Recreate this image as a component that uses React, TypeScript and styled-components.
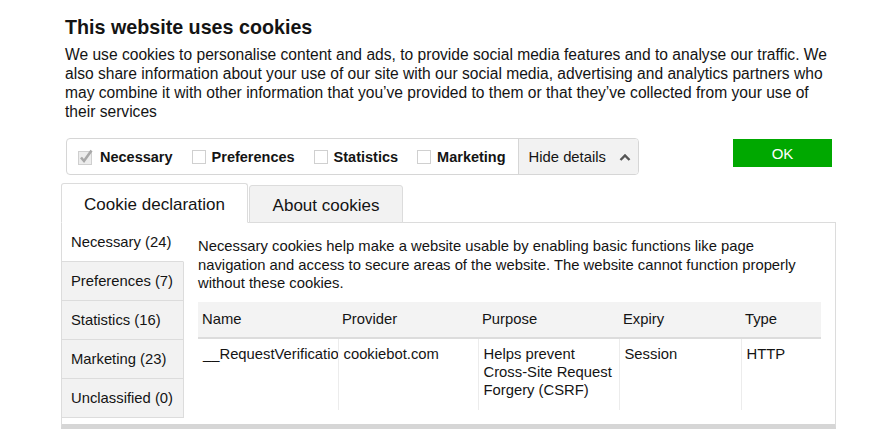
import styled, { createGlobalStyle } from "styled-components";

const GlobalStyle = createGlobalStyle`
  body {
    margin: 0;
    background: #ffffff;
    font-family: "Liberation Sans", Arial, sans-serif;
    color: #141414;
  }
`;

const Root = styled.div`
  width: 775px;
  margin-left: 61px;
  padding-top: 15px;
`;

const Title = styled.h2`
  margin: 0 0 0 4px;
  font-size: 19.7px;
  line-height: 24px;
  font-weight: 700;
  color: #141414;
`;

const Intro = styled.p`
  margin: 6px 0 0 4px;
  width: 770px;
  font-size: 15.6px;
  line-height: 19px;
  color: #141414;
`;

const ControlsRow = styled.div`
  display: flex;
  justify-content: space-between;
  align-items: flex-start;
  margin-top: 17px;
  padding-left: 5px;
`;

const Bar = styled.div`
  display: flex;
  align-items: stretch;
  height: 35px;
  border: 1px solid #d6d6d6;
  border-radius: 4px;
  overflow: hidden;
  padding-left: 11px;
`;

const CheckItem = styled.label<{ $last?: boolean }>`
  display: flex;
  align-items: center;
  gap: 6px;
  margin-right: ${(p) => (p.$last ? "12px" : "19px")};
  font-size: 14.5px;
  font-weight: 700;
  color: #141414;
`;

const Box = styled.span`
  display: inline-block;
  width: 12px;
  height: 12px;
  border: 1px solid #d0d0d0;
  background: #fff;
`;

const HideDetails = styled.div`
  display: flex;
  align-items: center;
  background: #f2f2f2;
  border-left: 1px solid #d6d6d6;
  padding: 0 7px 0 10px;
  font-size: 14.8px;
  color: #141414;
  gap: 13px;
`;

const OkButton = styled.button`
  width: 99px;
  height: 28px;
  margin-top: 1px;
  margin-right: 4px;
  border: none;
  background: #00a800;
  color: #ffffff;
  font-family: "Liberation Sans", Arial, sans-serif;
  font-size: 15px;
`;

const Tabs = styled.div`
  display: flex;
  align-items: flex-end;
  gap: 1px;
  margin-top: 8px;
`;

const Tab = styled.div<{ $active?: boolean }>`
  height: ${(p) => (p.$active ? "35px" : "33px")};
  padding-top: 3px;
  display: flex;
  align-items: center;
  justify-content: center;
  width: ${(p) => (p.$active ? "185px" : "152px")};
  border: 1px solid #dcdcdc;
  border-bottom: ${(p) => (p.$active ? "1px solid #ffffff" : "1px solid #dcdcdc")};
  margin-bottom: -1px;
  background: ${(p) => (p.$active ? "#ffffff" : "#f2f2f2")};
  border-radius: 3px 3px 0 0;
  font-size: 17px;
  color: #141414;
  position: relative;
  z-index: ${(p) => (p.$active ? 1 : 0)};
`;

const Panel = styled.div`
  display: flex;
  height: 201px;
  border: 1px solid #dcdcdc;
  border-bottom: 5px solid #d6d6d6;
`;

const Nav = styled.div`
  width: 122px;
  flex-shrink: 0;
  display: flex;
  flex-direction: column;
`;

const NavItem = styled.div<{ $active?: boolean }>`
  height: 38px;
  display: flex;
  align-items: center;
  padding-left: 9px;
  font-size: 14.8px;
  color: #141414;
  background: ${(p) => (p.$active ? "#ffffff" : "#f2f2f2")};
  border-bottom: 1px solid #dcdcdc;
  border-right: ${(p) => (p.$active ? "1px solid #ffffff" : "1px solid #dcdcdc")};
`;

const Content = styled.div`
  flex: 1;
  padding: 14px 14px 0 14px;
  overflow: hidden;
`;

const Description = styled.p`
  margin: 0;
  width: 623px;
  font-size: 14.8px;
  line-height: 18.5px;
  color: #141414;
`;

const Table = styled.table`
  margin-top: 9px;
  width: 623px;
  border-collapse: collapse;
  table-layout: fixed;
  font-size: 14.8px;
  color: #141414;
`;

const Th = styled.th`
  height: 35px;
  background: #f3f3f3;
  border-bottom: 2px solid #dcdcdc;
  text-align: left;
  font-weight: 400;
  padding: 0 0 0 4px;
`;

const Td = styled.td<{ $first?: boolean }>`
  vertical-align: top;
  padding: 6px 4px 11px 5px;
  line-height: 18px;
  border-left: ${(p) => (p.$first ? "none" : "1px solid #ececec")};
  white-space: ${(p) => (p.$first ? "nowrap" : "normal")};
  overflow: hidden;
  text-overflow: clip;
`;

function Checkbox({ checked }: { checked?: boolean }) {
  if (!checked) return <Box />;
  return (
    <svg width="16" height="16" viewBox="0 0 16 16">
      <rect x="0.5" y="2.5" width="13" height="13" fill="#ececec" stroke="#cfcfcf" />
      <path d="M3 8.5 L6 12 L13.5 1.5" fill="none" stroke="#a8a8a8" strokeWidth="2.6" />
    </svg>
  );
}

const categories = [
  { label: "Necessary", checked: true },
  { label: "Preferences" },
  { label: "Statistics" },
  { label: "Marketing" },
];

const navItems = [
  "Necessary (24)",
  "Preferences (7)",
  "Statistics (16)",
  "Marketing (23)",
  "Unclassified (0)",
];

const columns = [
  { name: "Name", width: 140 },
  { name: "Provider", width: 140 },
  { name: "Purpose", width: 141 },
  { name: "Expiry", width: 122 },
  { name: "Type", width: 80 },
];

export default function App() {
  return (
    <>
      <GlobalStyle />
      <Root>
        <Title>This website uses cookies</Title>
        <Intro>
          We use cookies to personalise content and ads, to provide social media features and to
          analyse our traffic. We also share information about your use of our site with our social
          media, advertising and analytics partners who may combine it with other information that
          you’ve provided to them or that they’ve collected from your use of their services
        </Intro>
        <ControlsRow>
          <Bar>
            {categories.map((c, i) => (
              <CheckItem key={c.label} $last={i === categories.length - 1}>
                <Checkbox checked={c.checked} />
                {c.label}
              </CheckItem>
            ))}
            <HideDetails>
              Hide details
              <svg width="12" height="8" viewBox="0 0 12 8">
                <path d="M1.5 7 L6 2.5 L10.5 7" fill="none" stroke="#555" strokeWidth="2.4" />
              </svg>
            </HideDetails>
          </Bar>
          <OkButton>OK</OkButton>
        </ControlsRow>
        <Tabs>
          <Tab $active>Cookie declaration</Tab>
          <Tab>About cookies</Tab>
        </Tabs>
        <Panel>
          <Nav>
            {navItems.map((n, i) => (
              <NavItem key={n} $active={i === 0}>
                {n}
              </NavItem>
            ))}
          </Nav>
          <Content>
            <Description>
              Necessary cookies help make a website usable by enabling basic functions like page
              navigation and access to secure areas of the website. The website cannot function
              properly without these cookies.
            </Description>
            <Table>
              <colgroup>
                {columns.map((c) => (
                  <col key={c.name} style={{ width: c.width }} />
                ))}
              </colgroup>
              <thead>
                <tr>
                  {columns.map((c) => (
                    <Th key={c.name}>{c.name}</Th>
                  ))}
                </tr>
              </thead>
              <tbody>
                <tr>
                  <Td $first>__RequestVerificationToken</Td>
                  <Td>cookiebot.com</Td>
                  <Td>Helps prevent Cross-Site Request Forgery (CSRF)</Td>
                  <Td>Session</Td>
                  <Td>HTTP</Td>
                </tr>
              </tbody>
            </Table>
          </Content>
        </Panel>
      </Root>
    </>
  );
}
